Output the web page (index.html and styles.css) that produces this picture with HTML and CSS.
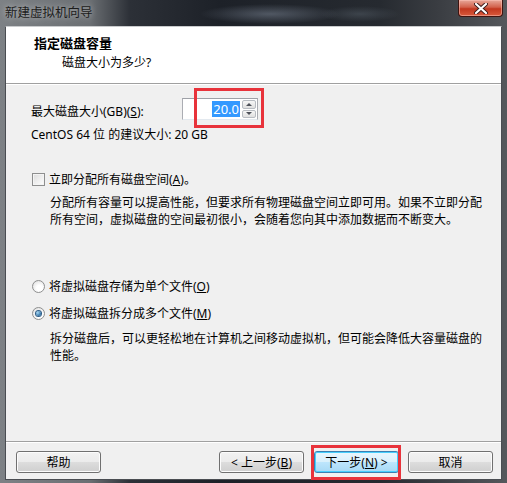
FILE: index.html
```html
<!DOCTYPE html>
<html lang="zh-CN">
<head>
    <meta charset="UTF-8">
    <title>新建虚拟机向导</title>
    <link rel="stylesheet" href="styles.css">
</head>
<body>
    <div class="window">
        <div class="titlebar">
            <span class="title">新建虚拟机向导</span>
            <button class="close" title="关闭">
                <svg width="14" height="11" viewBox="0 0 14 11">
                    <path d="M2 1 L12 10 M12 1 L2 10" stroke="#3a1a1a" stroke-width="4" stroke-linecap="round"/>
                    <path d="M2 1 L12 10 M12 1 L2 10" stroke="#ffffff" stroke-width="2.2" stroke-linecap="round"/>
                </svg>
            </button>
        </div>

        <div class="client">
            <div class="header">
                <div class="header-title">指定磁盘容量</div>
                <div class="header-sub">磁盘大小为多少?</div>
            </div>

            <div class="body">
                <div class="size-row">
                    <label class="size-label">最大磁盘大小(GB)(<u>S</u>):</label>
                    <div class="spin">
                        <div class="spin-field"><span class="sel">20.0</span></div>
                        <div class="spin-btns">
                            <div class="spin-btn"><span class="arrow-up"></span></div>
                            <div class="spin-btn"><span class="arrow-down"></span></div>
                        </div>
                        <div class="mark mark-spin"></div>
                    </div>
                </div>
                <div class="hint">CentOS 64 位 的建议大小: 20 GB</div>

                <div class="option check-row">
                    <span class="checkbox"></span>
                    <span>立即分配所有磁盘空间(<u>A</u>)。</span>
                </div>
                <p class="desc">分配所有容量可以提高性能，但要求所有物理磁盘空间立即可用。如果不立即分配所有空间，虚拟磁盘的空间最初很小，会随着您向其中添加数据而不断变大。</p>

                <div class="option radio-first">
                    <span class="radio"></span>
                    <span>将虚拟磁盘存储为单个文件(<u>O</u>)</span>
                </div>
                <div class="option radio-second">
                    <span class="radio checked"></span>
                    <span>将虚拟磁盘拆分成多个文件(<u>M</u>)</span>
                </div>
                <p class="desc desc-split">拆分磁盘后，可以更轻松地在计算机之间移动虚拟机，但可能会降低大容量磁盘的性能。</p>
            </div>

            <div class="footer">
                <button class="btn">帮助</button>
                <div class="spacer"></div>
                <button class="btn">&lt; 上一步(<u>B</u>)</button>
                <div class="next-wrap">
                    <button class="btn btn-default">下一步(<u>N</u>) &gt;</button>
                    <div class="mark mark-next"></div>
                </div>
                <button class="btn">取消</button>
            </div>
        </div>
    </div>
</body>
</html>
```

FILE: styles.css
```css
* {
    box-sizing: border-box;
}

body {
    margin: 0;
    font-family: "Noto Sans", "Noto Sans CJK SC", sans-serif;
    font-size: 12px;
    color: #000;
}

u {
    text-decoration: underline;
    text-underline-offset: 1px;
}

/* Aero glass frame */
.window {
    width: 507px;
    height: 483px;
    display: flex;
    flex-direction: column;
    padding: 0 5px 3px 5px;
    background:
        radial-gradient(ellipse 70px 10px at 270px 14px, rgba(120, 130, 145, 0.55), transparent),
        radial-gradient(ellipse 40px 8px at 360px 14px, rgba(90, 100, 110, 0.45), transparent),
        linear-gradient(90deg, #7d8185 0px, #6b6f73 90px, #2c3037 130px, #1d2128 220px, #262a30 380px, #3b3e43 440px, #55585c 507px);
}

.titlebar {
    height: 26px;
    flex-shrink: 0;
    display: flex;
    align-items: flex-start;
    justify-content: space-between;
}

.title {
    margin-top: 5px;
    line-height: 16px;
    font-size: 12.5px;
    color: #1c1c1c;
    text-shadow: 0 0 6px rgba(255, 255, 255, 0.6);
}

.close {
    width: 45px;
    height: 17px;
    margin-right: -1px;
    padding: 0;
    border: 1px solid #3f1410;
    border-top: none;
    border-radius: 0 0 4px 4px;
    background: linear-gradient(#e8a89a 0%, #d2614c 45%, #c2371f 55%, #d85a3c 100%);
    box-shadow: inset 0 0 0 1px rgba(255, 200, 190, 0.5);
    display: flex;
    align-items: center;
    justify-content: center;
}

.client {
    flex: 1;
    display: flex;
    flex-direction: column;
    background: #f0f0f0;
    border: 1px solid #4a4d52;
    border-top-color: #c9cbcd;
}

.header {
    height: 57px;
    flex-shrink: 0;
    background: #fff;
    border-bottom: 1px solid #a0a0a0;
    box-shadow: 0 1px 0 #fff;
    padding: 7px 0 0 28px;
}

.header-title {
    font-weight: bold;
    font-size: 13px;
    line-height: 18px;
}

.header-sub {
    margin-left: 28px;
    margin-top: 2px;
    line-height: 18px;
}

.body {
    flex: 1;
    padding: 14px 0 0 25px;
}

.size-row {
    display: flex;
    align-items: center;
    height: 22px;
}

.size-label {
    width: 151px;
    padding-top: 3px;
}

.spin {
    position: relative;
    width: 76px;
    height: 22px;
    display: flex;
    background: #fff;
    border: 1px solid #abadb3;
    border-top-color: #9ea1a7;
    border-bottom-color: #e3e9ef;
}

.spin-field {
    flex: 1;
    display: flex;
    align-items: center;
    justify-content: flex-end;
    padding-right: 2px;
}

.sel {
    background: #3399ff;
    color: #fff;
    font-size: 13px;
    line-height: 16px;
    padding: 0 1px;
}

.spin-btns {
    width: 15px;
    display: flex;
    flex-direction: column;
    gap: 1px;
    padding: 1px 1px 1px 0;
}

.spin-btn {
    flex: 1;
    display: flex;
    align-items: center;
    justify-content: center;
    border: 1px solid #b8bcc2;
    border-radius: 2px;
    background: linear-gradient(#f6f6f6, #e0e0e0);
}

.arrow-up,
.arrow-down {
    width: 0;
    height: 0;
    border-left: 3px solid transparent;
    border-right: 3px solid transparent;
}

.arrow-up {
    border-bottom: 3px solid #4d5059;
}

.arrow-down {
    border-top: 3px solid #4d5059;
}

/* red annotation frames */
.mark {
    position: absolute;
    border: 3px solid #e8333b;
    pointer-events: none;
}

.mark-spin {
    left: 11px;
    top: -11px;
    width: 70px;
    height: 40px;
}

.hint {
    margin-top: 6px;
    line-height: 17px;
}

.option {
    display: flex;
    align-items: center;
    gap: 4px;
    line-height: 17px;
}

.check-row {
    margin-top: 28px;
    margin-left: 1px;
}

.checkbox {
    width: 13px;
    height: 13px;
    border: 1px solid #8e8f8f;
    background: linear-gradient(135deg, #dcdcdc, #ffffff);
    box-shadow: inset 0 0 0 1px #f4f4f4;
}

.desc {
    margin: 6px 0 0 0;
    padding-left: 19px;
    padding-right: 16px;
    line-height: 17px;
}

.radio-first {
    margin-top: 50px;
    margin-left: 1px;
}

.radio-second {
    margin-top: 10px;
    margin-left: 1px;
}

.radio {
    width: 13px;
    height: 13px;
    border-radius: 50%;
    border: 1px solid #8e8f8f;
    background: radial-gradient(circle at 60% 65%, #ffffff 30%, #d9d9d9 100%);
    display: flex;
    align-items: center;
    justify-content: center;
}

.radio.checked::after {
    content: "";
    width: 5px;
    height: 5px;
    border-radius: 50%;
    background: radial-gradient(circle at 35% 35%, #a5d8f5, #1d5f96 80%);
    box-shadow: 0 0 0 1px #2f5d86;
}

.desc-split {
    margin-top: 8px;
}

.footer {
    height: 38px;
    flex-shrink: 0;
    display: flex;
    align-items: flex-start;
    gap: 10px;
    padding: 9px 8px 0 10px;
    border-top: 1px solid #a0a0a0;
    box-shadow: inset 0 1px 0 #fff;
}

.spacer {
    flex: 1;
}

.btn {
    width: 85px;
    height: 22px;
    padding: 0;
    font-family: inherit;
    font-size: 12px;
    color: #000;
    border: 1px solid #707070;
    border-radius: 3px;
    background: linear-gradient(#f2f2f2 0%, #ebebeb 50%, #dddddd 50%, #cfcfcf 100%);
    box-shadow: inset 0 0 0 1px #fcfcfc;
}

.next-wrap {
    position: relative;
    margin-right: -1px;
}

.btn-default {
    border-color: #3c7fb1;
    background: linear-gradient(#eaf6fd 0%, #d9f0fc 50%, #bee6fd 50%, #a7d9f5 100%);
    box-shadow: inset 0 0 0 1px #48cffd;
}

.mark-next {
    left: -3px;
    top: -6px;
    width: 90px;
    height: 35px;
}
```
